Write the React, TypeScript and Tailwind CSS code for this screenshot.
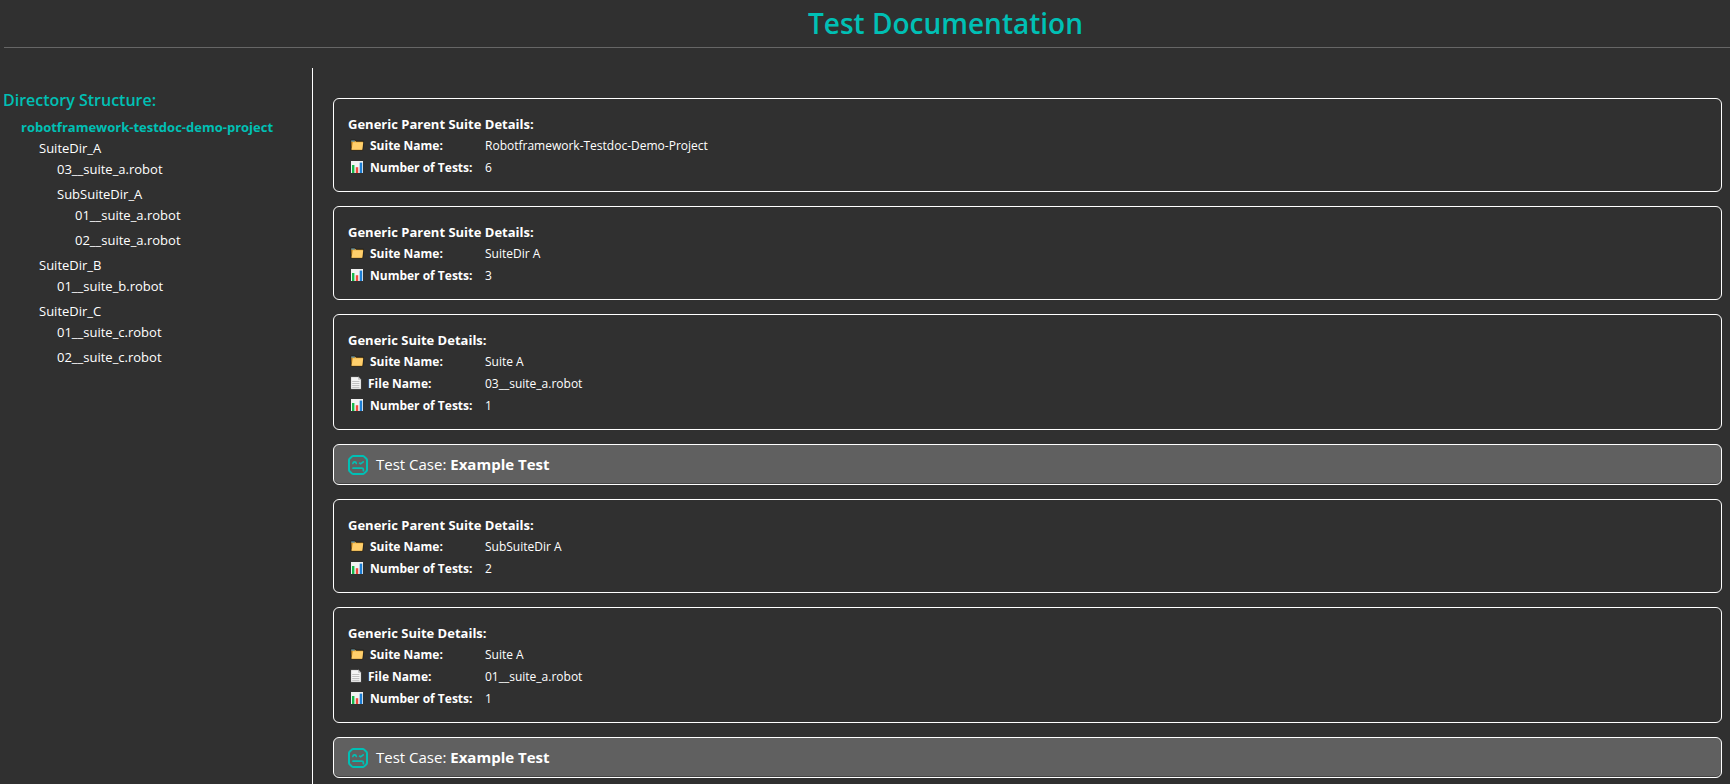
import React from "react";

type TreeNode = { name: string; root?: boolean; children?: TreeNode[] };

type Block =
  | { kind: "suite"; title: string; name: string; file?: string; tests: number }
  | { kind: "test"; name: string };

const tree: TreeNode = {
  name: "robotframework-testdoc-demo-project",
  root: true,
  children: [
    {
      name: "SuiteDir_A",
      children: [
        { name: "03__suite_a.robot" },
        {
          name: "SubSuiteDir_A",
          children: [{ name: "01__suite_a.robot" }, { name: "02__suite_a.robot" }],
        },
      ],
    },
    { name: "SuiteDir_B", children: [{ name: "01__suite_b.robot" }] },
    {
      name: "SuiteDir_C",
      children: [{ name: "01__suite_c.robot" }, { name: "02__suite_c.robot" }],
    },
  ],
};

const blocks: Block[] = [
  { kind: "suite", title: "Generic Parent Suite Details:", name: "Robotframework-Testdoc-Demo-Project", tests: 6 },
  { kind: "suite", title: "Generic Parent Suite Details:", name: "SuiteDir A", tests: 3 },
  { kind: "suite", title: "Generic Suite Details:", name: "Suite A", file: "03__suite_a.robot", tests: 1 },
  { kind: "test", name: "Example Test" },
  { kind: "suite", title: "Generic Parent Suite Details:", name: "SubSuiteDir A", tests: 2 },
  { kind: "suite", title: "Generic Suite Details:", name: "Suite A", file: "01__suite_a.robot", tests: 1 },
  { kind: "test", name: "Example Test" },
];

function FolderIcon() {
  return (
    <svg viewBox="0 0 14 14" className="h-3.5 w-3.5 shrink-0" aria-hidden="true">
      <path d="M.8 2.2h4.4l1 1h7.2l-.8 9H1.2z" fill="#d99a2b" stroke="#161412" strokeWidth=".8" />
      <path d="M1.2 2.4h3.4l.6 1H1.2z" fill="#3a8fd0" />
      <path d="M3 4.2h10.2l-.9 7.6H1.5z" fill="#ffcf6b" />
    </svg>
  );
}

function FileIcon() {
  return (
    <svg viewBox="0 0 12 14" className="h-3.5 w-3 shrink-0" aria-hidden="true">
      <path d="M.6.6h7.6l3.2 3.2v9.6H.6z" fill="#f4f4f4" stroke="#161616" strokeWidth=".7" />
      <path d="M8.2.6v3.2h3.2z" fill="#bdbdbd" />
      <path d="M2.2 5.5h7.2M2.2 7.5h7.2M2.2 9.5h7.2M2.2 11.4h7.2" stroke="#b4b4b4" strokeWidth=".8" />
    </svg>
  );
}

function ChartIcon() {
  return (
    <svg viewBox="0 0 14 14" className="h-3.5 w-3.5 shrink-0" aria-hidden="true">
      <path d="M.5.5h13v13H.5z" fill="#f2f2f2" stroke="#161616" strokeWidth=".8" />
      <path d="M2 5h2.4v8H2z" fill="#16b84a" />
      <path d="M5.8 7.2h2.4V13H5.8z" fill="#ef4a3c" />
      <path d="M9.7 2.6h2.5V13H9.7z" fill="#1d7fd6" />
    </svg>
  );
}

function RobotIcon() {
  return (
    <svg
      viewBox="0 0 20 20"
      className="h-5 w-5 shrink-0"
      fill="none"
      stroke="#00c0b5"
      strokeWidth="1.7"
      strokeLinecap="round"
      aria-hidden="true"
    >
      <path
        d="M5.3 1h9.4q.9 0 1.5.6l2.2 2.2q.6.6.6 1.5v9.4q0 .9-.6 1.5l-2.2 2.2q-.6.6-1.5.6H5.3q-.9 0-1.5-.6l-2.2-2.2Q1 15.6 1 14.7V5.3q0-.9.6-1.5l2.2-2.2Q4.4 1 5.3 1z"
        strokeWidth="2"
      />
      <path d="M4.9 8.5q.2-1.7 1.7-1.7t1.7 1.7" />
      <path d="M11.6 8.1l1.1.7 2.5-2" />
      <path d="M5 13.2h8.8q1.6 0 1.6 1.5v1" />
    </svg>
  );
}

function Tree({ node }: { node: TreeNode }) {
  return (
    <li className={node.children ? "pl-[18px]" : "mb-1 pl-[18px]"}>
      <a
        href={"#" + node.name}
        className={node.root ? "block font-bold text-[#00c0b5]" : "block text-white"}
      >
        {node.name}
      </a>
      {node.children && (
        <ul>
          {node.children.map((child) => (
            <Tree key={child.name} node={child} />
          ))}
        </ul>
      )}
    </li>
  );
}

function Row({ icon, label, value }: { icon: React.ReactNode; label: string; value: string | number }) {
  return (
    <tr className="h-[22px]">
      <th scope="row" className="w-[137px] p-0 text-left font-bold">
        <span className="flex items-center gap-1.5 pl-0.5 whitespace-nowrap">
          {icon}
          {label}
        </span>
      </th>
      <td className="p-0">{value}</td>
    </tr>
  );
}

export default function App() {
  return (
    <div className="flex min-h-screen flex-col bg-[#303030] font-['Open_Sans','Noto_Sans',sans-serif] text-[13px] leading-[21px] text-white">
      <header className="ml-1 border-b border-[#666] py-0.5">
        <h1 className="pl-[157px] text-center text-[28px] leading-[43px] font-semibold text-[#00c0b5]">
          Test Documentation
        </h1>
      </header>
      <div className="mt-5 flex flex-1">
        <nav aria-label="Directory Structure" className="w-[313px] shrink-0 border-r border-white pt-5 pl-[3px]">
          <h2 className="mb-[5px] text-base leading-6 font-semibold text-[#00c0b5]">Directory Structure:</h2>
          <ul>
            <Tree node={tree} />
          </ul>
        </nav>
        <main className="flex min-w-0 flex-1 flex-col gap-3.5 pt-[30px] pr-2 pb-[7px] pl-5">
          {blocks.map((block, i) =>
            block.kind === "suite" ? (
              <section key={i} className="rounded-md border border-white px-3.5 pt-[15px] pb-[13px]">
                <h3 className="leading-5 font-bold">{block.title}</h3>
                <table className="border-collapse text-xs leading-[21px]">
                  <tbody>
                    <Row icon={<FolderIcon />} label="Suite Name:" value={block.name} />
                    {block.file && <Row icon={<FileIcon />} label="File Name:" value={block.file} />}
                    <Row icon={<ChartIcon />} label="Number of Tests:" value={block.tests} />
                  </tbody>
                </table>
              </section>
            ) : (
              <button
                key={i}
                type="button"
                className="flex h-[41px] items-center gap-2 rounded-md border border-white bg-[#606060] px-3.5 text-left text-[15px] shadow-[inset_0_-1px_0_#444]"
              >
                <RobotIcon />
                <span>
                  Test Case: <b className="font-bold">{block.name}</b>
                </span>
              </button>
            ),
          )}
        </main>
      </div>
    </div>
  );
}
